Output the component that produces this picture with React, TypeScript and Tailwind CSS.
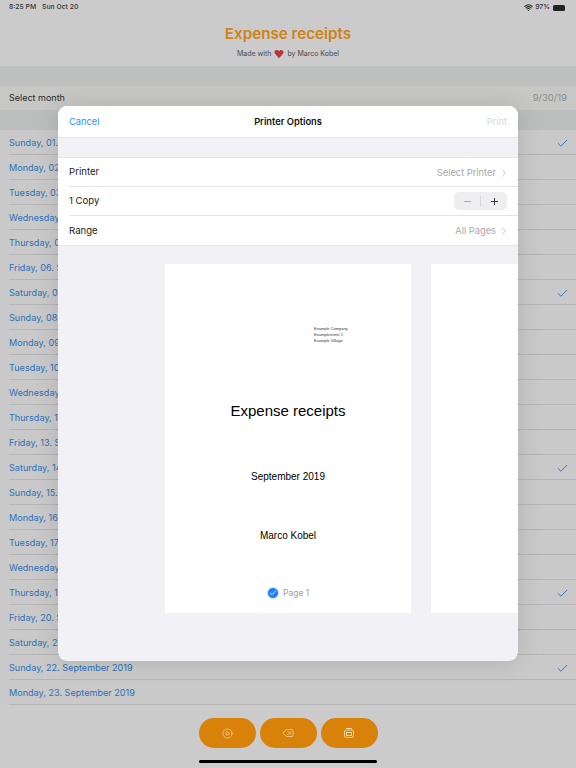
import { Check, ChevronRight, CirclePlay, Delete, Minus, Plus, Wifi } from 'lucide-react';

const DAYS = [
  ['Sunday, 01. September 2019', true],
  ['Monday, 02. September 2019', false],
  ['Tuesday, 03. September 2019', false],
  ['Wednesday, 04. September 2019', false],
  ['Thursday, 05. September 2019', false],
  ['Friday, 06. September 2019', false],
  ['Saturday, 07. September 2019', true],
  ['Sunday, 08. September 2019', false],
  ['Monday, 09. September 2019', false],
  ['Tuesday, 10. September 2019', false],
  ['Wednesday, 11. September 2019', false],
  ['Thursday, 12. September 2019', false],
  ['Friday, 13. September 2019', false],
  ['Saturday, 14. September 2019', true],
  ['Sunday, 15. September 2019', false],
  ['Monday, 16. September 2019', false],
  ['Tuesday, 17. September 2019', false],
  ['Wednesday, 18. September 2019', false],
  ['Thursday, 19. September 2019', true],
  ['Friday, 20. September 2019', false],
  ['Saturday, 21. September 2019', false],
  ['Sunday, 22. September 2019', true],
  ['Monday, 23. September 2019', false],
] as const;

function StatusBar() {
  return (
    <div className="flex h-[14px] items-center justify-between pl-[9px] pr-[11px] pt-[1px] text-[6.8px] font-medium text-[#333]">
      <div className="flex gap-[6px]">
        <span>8:25 PM</span>
        <span>Sun Oct 20</span>
      </div>
      <div className="flex items-center gap-[2px]">
        <Wifi size={9} strokeWidth={3} />
        <span>97%</span>
        <div className="ml-[1px] h-[6px] w-[12px] rounded-[1.5px] bg-[#222]" />
      </div>
    </div>
  );
}

function OptionRow({ label, value, border }: { label: string; value?: string; border?: boolean }) {
  return (
    <div className="pl-[11px]">
      <div className={`flex h-[29px] items-center justify-between pr-[11px] text-[9.6px] text-[#222] ${border ? 'border-b border-[#e4e4e6]' : ''}`}>
        <span className="pt-[1px]">{label}</span>
        {value ? (
          <span className="-mr-[3px] flex items-center gap-[2px] pt-[1px] text-[9.3px] text-[#a8a8ab]">
            {value}
            <ChevronRight size={12} strokeWidth={1.3} className="text-[#a8a8ab]" />
          </span>
        ) : (
          <div className="flex h-[18px] w-[53px] items-center rounded-[5px] bg-[#eeeef0]">
            <div className="flex flex-1 justify-center text-[#8f8f92]">
              <Minus size={11} strokeWidth={1.5} />
            </div>
            <div className="h-[11px] w-px bg-[#d6d6d8]" />
            <div className="flex flex-1 justify-center text-[#222]">
              <Plus size={11} strokeWidth={1.8} />
            </div>
          </div>
        )}
      </div>
    </div>
  );
}

function PrinterOptions() {
  return (
    <div className="absolute left-[58px] top-[106px] flex h-[555px] w-[460px] flex-col overflow-hidden rounded-[9px] bg-[#f2f2f6] shadow-[0_0_24px_rgba(0,0,0,0.12)]">
      <div className="grid h-[32px] grid-cols-3 items-center border-b border-[#e8e8ea] bg-white px-[11px] pt-[1px] text-[9.3px]">
        <span className="text-[#2f8ff0]">Cancel</span>
        <span className="text-center font-semibold text-[#111]">Printer Options</span>
        <span className="text-right text-[#d8d8da]">Print</span>
      </div>
      <div className="mt-[19px] border-y border-[#e6e6e8] bg-white">
        <OptionRow label="Printer" value="Select Printer" border />
        <OptionRow label="1 Copy" border />
        <OptionRow label="Range" value="All Pages" />
      </div>
      <div className="mt-[18px] flex gap-[20px] pl-[107px]">
        <div className="relative flex h-[349px] w-[246px] shrink-0 flex-col items-center bg-white font-['Liberation_Sans',sans-serif] text-black">
          <div className="absolute left-[149px] top-[62px] text-[4px] leading-[6px] text-[#333]">
            <div>Example Company</div>
            <div>Examplestreet 1</div>
            <div>Example Village</div>
          </div>
          <div className="mt-[137px] text-[15px] leading-[20px]">Expense receipts</div>
          <div className="mt-[44px] text-[10px] leading-[24px]">September 2019</div>
          <div className="mt-[35px] text-[10px] leading-[24px]">Marco Kobel</div>
          <div className="absolute left-[102px] top-[323px] flex items-center gap-[4px] font-['Inter',sans-serif] text-[8.5px] text-[#a0a0a3]">
            <span className="flex h-[12px] w-[12px] items-center justify-center rounded-full border border-[#cfe2fb] bg-[#1a82f7] text-white">
              <Check size={8} strokeWidth={2.5} />
            </span>
            Page 1
          </div>
        </div>
        <div className="h-[349px] w-[246px] shrink-0 bg-white" />
      </div>
    </div>
  );
}

function PillButton({ children }: { children: React.ReactNode }) {
  return (
    <div className="flex h-[30px] w-[57px] items-center justify-center rounded-full bg-[#d8820a] text-[#f3d6aa]">
      {children}
    </div>
  );
}

export default function App() {
  return (
    <div className="relative h-[768px] w-[576px] overflow-hidden bg-[#cbcbcb] font-['Inter',sans-serif]">
      <StatusBar />
      <div className="flex h-[52px] flex-col items-center">
        <h1 className="mt-[10px] text-[15.2px] font-semibold leading-[20px] text-[#cf8215]">Expense receipts</h1>
        <p className="mt-[5px] flex items-center gap-[2px] text-[7px] leading-[10px] text-[#4a4a4a]">
          Made with
          <svg width="10" height="10" viewBox="0 0 24 24" className="mx-[1px]">
            <path d="M12 22 2.5 11.5C-.5 7.5 2 2.5 6.5 2.5c2.4 0 4.3 1.2 5.5 3.2 1.2-2 3.1-3.2 5.5-3.2 4.5 0 7 5 4 9z" fill="#b8343c" />
          </svg>
          by Marco Kobel
        </p>
      </div>
      <div className="h-[20px] bg-[#bfc1c1]" />
      <div className="flex h-[24px] items-center justify-between bg-[#c7c8c6] px-[9px] text-[9px] text-[#2a2a2a]">
        <span>Select month</span>
        <span className="text-[9.5px] text-[#8c8d8c]">9/30/19</span>
      </div>
      <div className="h-[20px] bg-[#bcbebd]" />
      <div className="bg-[#c8c9c8]">
        {DAYS.map(([day, checked]) => (
          <div key={day} className="pl-[9px]">
            <div className="flex h-[25px] items-center justify-between border-b border-[#b4b5b4] pr-[7px] pt-[2px] text-[9.1px] text-[#2f72b8]">
              <span>{day}</span>
              {checked && <Check size={13} strokeWidth={1.7} className="text-[#2a6fc0]" />}
            </div>
          </div>
        ))}
      </div>
      <div className="mt-[13px] flex justify-center gap-[4px]">
        <PillButton>
          <CirclePlay size={11} strokeWidth={1.5} />
        </PillButton>
        <PillButton>
          <Delete size={12} strokeWidth={1.5} />
        </PillButton>
        <PillButton>
          <svg width="12" height="12" viewBox="0 0 12 12" fill="none" stroke="currentColor" strokeWidth="1">
            <path d="M3 1.5h6" />
            <rect x="1.5" y="3" width="9" height="7.5" rx="2" />
            <rect x="3.5" y="5.5" width="5" height="3" />
          </svg>
        </PillButton>
      </div>
      <div className="absolute bottom-[5px] left-[199px] h-[3px] w-[178px] rounded-full bg-black" />
      <PrinterOptions />
    </div>
  );
}
